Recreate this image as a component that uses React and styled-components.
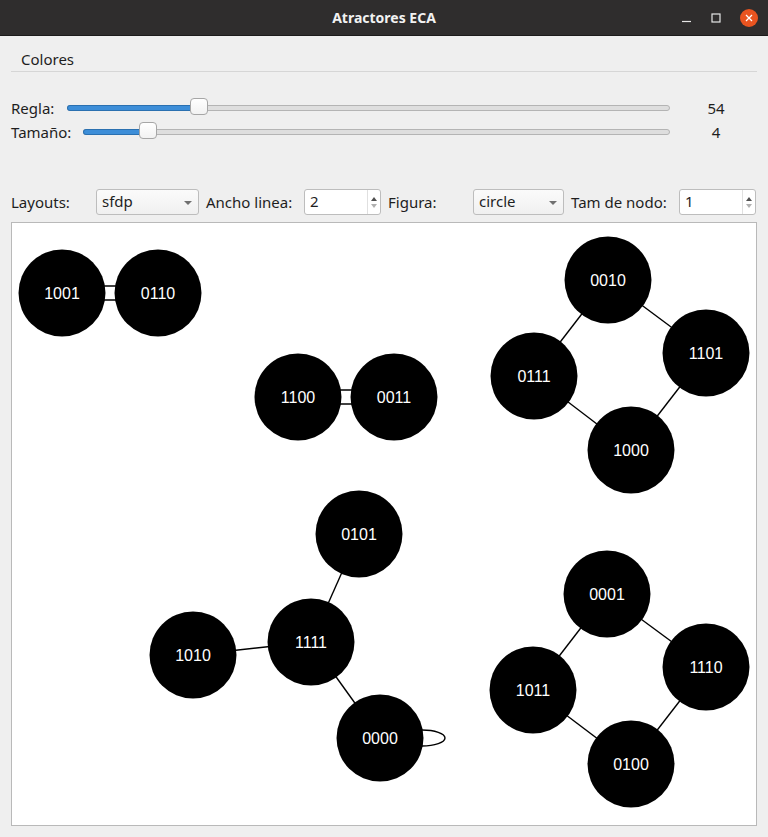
import React from "react";
import styled, { createGlobalStyle } from "styled-components";

const GlobalStyle = createGlobalStyle`
  html, body {
    margin: 0;
    padding: 0;
    background: #efefef;
  }
  #root {
    width: 768px;
    height: 837px;
  }
`;

const Window = styled.div`
  width: 768px;
  height: 837px;
  display: flex;
  flex-direction: column;
  background: #efefef;
  font-family: "Noto Sans", "DejaVu Sans", sans-serif;
  font-size: 14px;
  color: #1e1e1e;
  overflow: hidden;
`;

const TitleBar = styled.div`
  height: 36px;
  flex: none;
  background: #2f2d2d;
  border-bottom: 1px solid #1c1b1b;
  box-sizing: border-box;
  display: flex;
  align-items: center;
  justify-content: center;
  position: relative;
  color: #f2f2f2;
  font-weight: 700;
  font-size: 14px;
`;

const Controls = styled.div`
  position: absolute;
  right: 10px;
  top: 0;
  height: 36px;
  display: flex;
  align-items: center;
  gap: 19px;
`;

const CloseButton = styled.div`
  width: 18px;
  height: 18px;
  border-radius: 50%;
  background: #e95420;
  display: flex;
  align-items: center;
  justify-content: center;
`;

const MenuBar = styled.div`
  margin: 0 11px;
  height: 35px;
  border-bottom: 1px solid #d6d6d6;
  display: flex;
  align-items: center;
  flex: none;
`;

const MenuItem = styled.div`
  padding: 0 10px;
  font-size: 15px;
  margin-top: 11px;
`;

const SliderBlock = styled.div`
  padding: 24px 11px 0;
  display: flex;
  flex-direction: column;
  flex: none;
`;

const SliderRow = styled.div`
  height: 24px;
  display: flex;
  align-items: center;
`;

const Label = styled.span`
  font-size: 15px;
  white-space: nowrap;
  flex: none;
  width: ${({ $w }) => ($w ? `${$w}px` : "auto")};
`;

const Track = styled.div`
  flex: 1;
  height: 4px;
  margin-left: ${({ $gap }) => $gap}px;
  background: #dedede;
  border: 1px solid #b4b4b4;
  border-radius: 3px;
  position: relative;
`;

const Fill = styled.div`
  height: 100%;
  background: #3d8ed8;
  border-radius: 3px 0 0 3px;
  box-shadow: 0 0 0 1px #2a70b0;
`;

const Handle = styled.div`
  position: absolute;
  top: -8px;
  width: 18px;
  height: 17px;
  margin-left: -9px;
  background: linear-gradient(#ffffff, #f2f2f2);
  border: 1px solid #a6a6a6;
  border-radius: 4px;
  box-sizing: border-box;
`;

const Value = styled.span`
  width: 87px;
  box-sizing: border-box;
  flex: none;
  text-align: center;
  font-size: 15px;
  padding-left: 5px;
`;

const Toolbar = styled.div`
  margin-top: 45px;
  padding: 0 11px;
  height: 26px;
  display: flex;
  align-items: center;
  flex: none;
`;

const Combo = styled.div`
  width: ${({ $w }) => $w}px;
  height: 26px;
  flex: none;
  box-sizing: border-box;
  margin-right: 7px;
  border: 1px solid #bdbdbd;
  border-radius: 3px;
  background: linear-gradient(#fbfbfb, #f0f0f0);
  display: flex;
  align-items: center;
  justify-content: space-between;
  padding: 0 6px 2px 5px;
  font-size: 15px;
`;

const Arrow = styled.span`
  width: 0;
  height: 0;
  border-left: 4px solid transparent;
  border-right: 4px solid transparent;
  border-top: 4px solid #707070;
  margin-top: 3px;
`;

const Spin = styled.div`
  width: 77px;
  height: 26px;
  flex: none;
  box-sizing: border-box;
  margin-right: ${({ $last }) => ($last ? 0 : 7)}px;
  border: 1px solid #bdbdbd;
  border-radius: 3px;
  background: #ffffff;
  display: flex;
  align-items: center;
  font-size: 15px;
`;

const SpinText = styled.span`
  flex: 1;
  padding: 0 0 2px 5px;
`;

const SpinButtons = styled.div`
  width: 12px;
  height: 100%;
  border-left: 1px solid #e0e0e0;
  display: flex;
  flex-direction: column;
  align-items: center;
  justify-content: center;
  gap: 3px;
`;

const SpinArrow = styled.span`
  width: 0;
  height: 0;
  border-left: 3px solid transparent;
  border-right: 3px solid transparent;
  ${({ $up }) =>
    $up ? "border-bottom: 4px solid #505050;" : "border-top: 4px solid #b0b0b0;"}
`;

const Canvas = styled.div`
  margin: 7px 11px 0;
  height: 604px;
  box-sizing: border-box;
  background: #ffffff;
  border: 1px solid #b9b9b9;
  flex: none;
`;

const nodes = [
  { id: "1001", x: 62, y: 293 },
  { id: "0110", x: 158, y: 293 },
  { id: "1100", x: 298, y: 397 },
  { id: "0011", x: 394, y: 397 },
  { id: "0010", x: 608, y: 280 },
  { id: "1101", x: 706, y: 353 },
  { id: "0111", x: 534, y: 376 },
  { id: "1000", x: 631, y: 450 },
  { id: "0101", x: 359, y: 534 },
  { id: "1111", x: 311, y: 642 },
  { id: "1010", x: 193, y: 655 },
  { id: "0000", x: 380, y: 738 },
  { id: "0001", x: 607, y: 594 },
  { id: "1110", x: 706, y: 667 },
  { id: "1011", x: 533, y: 690 },
  { id: "0100", x: 631, y: 764 },
];

const edges = [
  ["0010", "0111"],
  ["0010", "1101"],
  ["0111", "1000"],
  ["1101", "1000"],
  ["0101", "1111"],
  ["1111", "1010"],
  ["1111", "0000"],
  ["0001", "1011"],
  ["0001", "1110"],
  ["1011", "0100"],
  ["1110", "0100"],
];

const pos = Object.fromEntries(nodes.map((n) => [n.id, n]));

// viewBox uses window coordinates so the nodes can be read off the screenshot
const Graph = () => (
  <svg width="744" height="602" viewBox="12 223 744 602">
    <g stroke="#000" strokeWidth="1.4" fill="none">
      {edges.map(([a, b]) => (
        <line
          key={a + b}
          x1={pos[a].x}
          y1={pos[a].y}
          x2={pos[b].x}
          y2={pos[b].y}
        />
      ))}
      <line x1="90" y1="286" x2="130" y2="286" />
      <line x1="90" y1="300" x2="130" y2="300" />
      <line x1="326" y1="390" x2="366" y2="390" />
      <line x1="326" y1="404" x2="366" y2="404" />
      <ellipse cx="422" cy="738" rx="23" ry="8" />
    </g>
    {nodes.map((n) => (
      <g key={n.id}>
        <circle cx={n.x} cy={n.y} r="43.5" fill="#000" />
        <text
          x={n.x}
          y={n.y + 5.5}
          fill="#fff"
          fontFamily="'Liberation Sans', Arial, sans-serif"
          fontSize="16"
          textAnchor="middle"
        >
          {n.id}
        </text>
      </g>
    ))}
  </svg>
);

export default function App() {
  return (
    <>
      <GlobalStyle />
      <Window>
        <TitleBar>
          Atractores ECA
          <Controls>
            <svg width="10" height="10" viewBox="0 0 10 10">
              <line x1="0" y1="8.5" x2="9" y2="8.5" stroke="#e6e6e6" strokeWidth="1.2" />
            </svg>
            <svg width="10" height="10" viewBox="0 0 10 10">
              <rect x="1" y="1" width="8" height="8" fill="none" stroke="#e6e6e6" strokeWidth="1.2" />
            </svg>
            <CloseButton>
              <svg width="8" height="8" viewBox="0 0 8 8">
                <path d="M1 1L7 7M7 1L1 7" stroke="#fff" strokeWidth="1.3" />
              </svg>
            </CloseButton>
          </Controls>
        </TitleBar>
        <MenuBar>
          <MenuItem>Colores</MenuItem>
        </MenuBar>
        <SliderBlock>
          <SliderRow>
            <Label>Regla:</Label>
            <Track $gap={13}>
              <Fill style={{ width: "21.7%" }} />
              <Handle style={{ left: "21.7%" }} />
            </Track>
            <Value>54</Value>
          </SliderRow>
          <SliderRow>
            <Label>Tamaño:</Label>
            <Track $gap={12}>
              <Fill style={{ width: "10.9%" }} />
              <Handle style={{ left: "10.9%" }} />
            </Track>
            <Value>4</Value>
          </SliderRow>
        </SliderBlock>
        <Toolbar>
          <Label $w={85}>Layouts:</Label>
          <Combo $w={103}>
            sfdp
            <Arrow />
          </Combo>
          <Label $w={98}>Ancho linea:</Label>
          <Spin>
            <SpinText>2</SpinText>
            <SpinButtons>
              <SpinArrow $up />
              <SpinArrow />
            </SpinButtons>
          </Spin>
          <Label $w={85}>Figura:</Label>
          <Combo $w={91}>
            circle
            <Arrow />
          </Combo>
          <Label $w={108}>Tam de nodo:</Label>
          <Spin $last>
            <SpinText>1</SpinText>
            <SpinButtons>
              <SpinArrow $up />
              <SpinArrow />
            </SpinButtons>
          </Spin>
        </Toolbar>
        <Canvas>
          <Graph />
        </Canvas>
      </Window>
    </>
  );
}
